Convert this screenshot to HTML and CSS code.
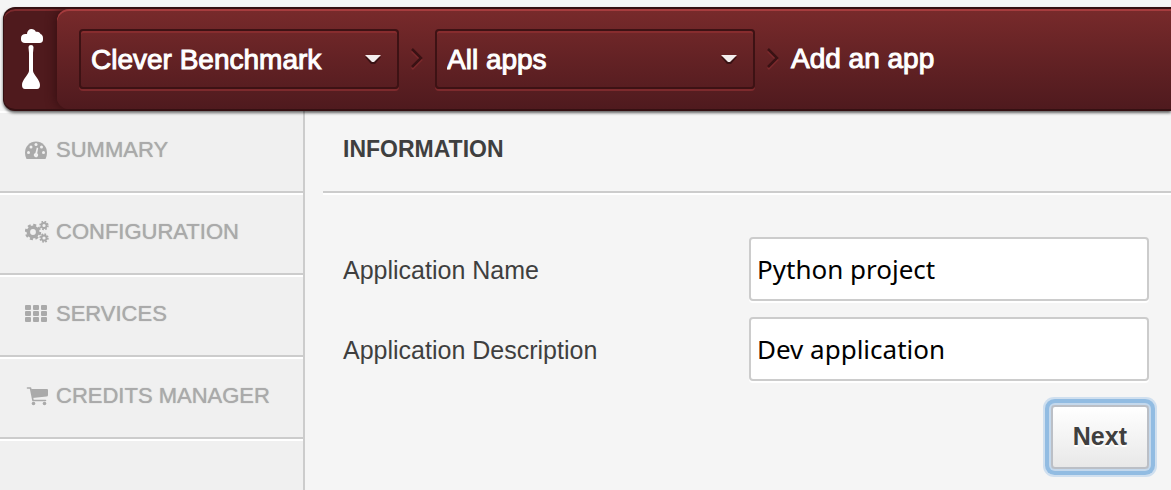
FILE: index.html
```html
<!DOCTYPE html>
<html lang="en">
<head>
<meta charset="utf-8">
<title>Add an app</title>
<link rel="stylesheet" href="styles.css">
</head>
<body>
<header class="topbar">
  <a class="logo" href="#" aria-label="Home">
    <svg width="24" height="62" viewBox="0 0 24 62" fill="#fff">
      <path d="M4 14C1.500 14 0 12.500 0 10.500V9C0 6.500 2 5 4.500 5H6C6 2 8 0 10.500 0C12.500 0 14 1 14.800 2.800C17.500 2.200 19 3.500 19.500 5C21 5.500 22 7 22 9V10.500C22 12.500 21 14 18.500 14Z"/>
      <path d="M7.500 18.500C7.500 16.800 8.700 16 10 16S12.500 16.800 12.500 18.500L12 24V42C12.500 45.500 19 51 19 56C19 58.500 18 60 16 60H4C2 60 1 58.500 1 56C1 51 7.500 45.500 8 42V24Z"/>
    </svg>
  </a>
  <nav class="crumbs" aria-label="Breadcrumb">
    <div class="picker">
      <select class="picker-select" aria-label="Organisation"><option>Clever Benchmark</option></select>
      <svg class="picker-arrow" width="18" height="12" viewBox="0 0 18 12"><path d="M1 3H17L11 10H7Z" fill="#3a1214"/><path d="M1 1H17L10 8H8Z" fill="#f4eeee"/></svg>
    </div>
    <svg class="chevron" width="14" height="24" viewBox="0 0 14 24" fill="none" stroke-width="2.500"><path d="M2 4L11 13L2 22" stroke="#7d2a2d"/><path d="M2 2L11 11L2 20" stroke="#3a1214"/></svg>
    <div class="picker">
      <select class="picker-select" aria-label="Application"><option>All apps</option></select>
      <svg class="picker-arrow" width="18" height="12" viewBox="0 0 18 12"><path d="M1 3H17L11 10H7Z" fill="#3a1214"/><path d="M1 1H17L10 8H8Z" fill="#f4eeee"/></svg>
    </div>
    <svg class="chevron" width="14" height="24" viewBox="0 0 14 24" fill="none" stroke-width="2.500"><path d="M2 4L11 13L2 22" stroke="#7d2a2d"/><path d="M2 2L11 11L2 20" stroke="#3a1214"/></svg>
    <span class="current">Add an app</span>
  </nav>
</header>
<div class="page">
  <nav class="sidebar" aria-label="Sections">
    <a class="item" href="#">
      <svg class="item-icon" width="24" height="22" viewBox="0 0 24 22"><path d="M0 13.500A11 11 0 0 1 22 13.500Q22 17.500 20.500 20H1.500Q0 17.500 0 13.500Z" fill="#aaa"/><g fill="#f0f0f0"><circle cx="3.500" cy="13.500" r="1.500"/><circle cx="6" cy="8" r="1.500"/><circle cx="11" cy="5.500" r="1.500"/><circle cx="16.500" cy="8" r="1.500"/><circle cx="18.500" cy="13.500" r="1.500"/><path d="M11.800 8.500L13.200 8.900L12.200 14.200A2.200 2.200 0 1 1 10.400 13.900Z"/></g></svg>
      SUMMARY
    </a>
    <a class="item" href="#">
      <svg class="item-icon" width="24" height="22" viewBox="0 0 24 22" fill="none" stroke="#aaa"><circle cx="8" cy="11" r="4.700" stroke-width="3.600"/><circle cx="8" cy="11" r="7" stroke-width="2.400" stroke-dasharray="3 2.498"/><circle cx="19" cy="4.500" r="2.500" stroke-width="1.800"/><circle cx="19" cy="4.500" r="3.900" stroke-width="1.600" stroke-dasharray="1.700 1.363"/><circle cx="19" cy="17" r="2.500" stroke-width="1.800"/><circle cx="19" cy="17" r="3.900" stroke-width="1.600" stroke-dasharray="1.700 1.363"/></svg>
      CONFIGURATION
    </a>
    <a class="item" href="#">
      <svg class="item-icon" width="24" height="22" viewBox="0 0 24 22" fill="#aaa"><rect y="2" width="6" height="5" rx="1"/><rect x="8" y="2" width="6" height="5" rx="1"/><rect x="16" y="2" width="6" height="5" rx="1"/><rect y="8" width="6" height="5" rx="1"/><rect x="8" y="8" width="6" height="5" rx="1"/><rect x="16" y="8" width="6" height="5" rx="1"/><rect y="14" width="6" height="5" rx="1"/><rect x="8" y="14" width="6" height="5" rx="1"/><rect x="16" y="14" width="6" height="5" rx="1"/></svg>
      SERVICES
    </a>
    <a class="item" href="#">
      <svg class="item-icon" width="24" height="22" viewBox="0 0 24 22"><path d="M2.500 3H5.500L8 15.500H20.500" fill="none" stroke="#aaa" stroke-width="1.600" stroke-linecap="round" stroke-linejoin="round"/><path d="M6 4H22Q23 4 23 5V10Q23 11.500 21.500 11.600L7.500 13Z" fill="#aaa"/><circle cx="8.500" cy="18.500" r="1.800" fill="#aaa"/><circle cx="19.500" cy="18.500" r="1.800" fill="#aaa"/></svg>
      CREDITS MANAGER
    </a>
    <div class="rest"></div>
  </nav>
  <main class="content">
    <h1 class="title">INFORMATION</h1>
    <form class="form">
      <label class="label" for="name">Application Name</label>
      <input class="field" id="name" type="text" value="Python project">
      <label class="label" for="description">Application Description</label>
      <input class="field" id="description" type="text" value="Dev application">
      <button class="next" type="button">Next</button>
    </form>
  </main>
</div>
</body>
</html>
```
FILE: styles.css
```css
* { box-sizing: border-box; }

body {
  margin: 0;
  min-height: 100vh;
  display: flex;
  flex-direction: column;
  overflow-x: hidden;
  background: #f5f5f5;
  color: #3f3f3f;
  font-family: "Liberation Sans", Arial, sans-serif;
}

/* Top bar */
.topbar {
  z-index: 1;
  display: flex;
  height: 104px;
  margin: 7px 0 0 3px;
  border: solid #351012;
  border-width: 2px 0 2px 1px;
  border-radius: 12px 0 0 12px;
  background: #4f1a1d;
  box-shadow: inset 0 2px #7d2a2d, 0 2px 3px rgba(0, 0, 0, 0.6);
}

.logo {
  width: 53px;
  flex: none;
  padding: 20px 0 0 17px;
  border-radius: 12px 0 0 12px;
}

.logo svg { display: block; }

.crumbs {
  flex: 1;
  min-width: 0;
  display: flex;
  align-items: center;
  padding-left: 22px;
  border-radius: 12px 0 0 12px;
  background: linear-gradient(#782a2b, #4f1a1e);
  box-shadow: inset 0 2px #a63c3e, -2px 0 10px #3a1013;
  clip-path: inset(0 0 0 -20px);
}

.picker {
  position: relative;
  flex: 0 1 320px;
  min-width: 0;
}

.picker-select {
  display: block;
  width: 100%;
  height: 60px;
  padding: 0 48px 0 10px;
  border: 2px solid #3d1214;
  border-radius: 4px;
  appearance: none;
  background: transparent;
  box-shadow: inset 0 2px #872c2e, 0 2px #7d2a2d;
  color: #fff;
  font: 28px "Liberation Sans", Arial, sans-serif;
  -webkit-text-stroke: 1px #fff;
}

.picker-select option { color: #3f3f3f; }

.picker-arrow {
  position: absolute;
  top: 25px;
  right: 17px;
  pointer-events: none;
}

.chevron {
  flex: none;
  margin: 0 11px;
}

.current {
  color: #fff;
  font-size: 28px;
  white-space: nowrap;
  -webkit-text-stroke: 1px #fff;
}

/* Sidebar */
.page {
  flex: 1;
  display: flex;
}

.sidebar {
  flex: none;
  width: 305px;
  border-right: 2px solid #ccc;
  background: #f0f0f0;
}

.item {
  display: flex;
  align-items: center;
  gap: 7px;
  height: 82px;
  padding: 0 16px 4px 25px;
  border-top: 2px solid #fff;
  border-bottom: 2px solid #ccc;
  color: #aaa;
  font-size: 22px;
  text-decoration: none;
  text-shadow: 0 0 1px #aaa;
  white-space: nowrap;
}

.item-icon { flex: none; }

.rest { border-top: 2px solid #fff; }

/* Form */
.content {
  flex: 1;
  min-width: 0;
  padding-left: 18px;
}

.title {
  margin: 0;
  padding: 22px 20px 26px;
  border-bottom: 2px solid #ccc;
  box-shadow: 0 2px #fff;
  font-size: 23px;
  line-height: 32px;
}

.form {
  display: grid;
  grid-template-columns: 1fr 400px;
  row-gap: 16px;
  align-items: center;
  padding: 44px 22px 20px 20px;
}

.label {
  padding-top: 2px;
  font-size: 25px;
}

.field {
  width: 100%;
  height: 64px;
  padding: 0 6px;
  border: 2px solid #ccc;
  border-radius: 4px;
  background: #fff;
  box-shadow: 0 2px #fff;
  color: #000;
  font: 26px "Noto Sans", sans-serif;
}

.next {
  grid-column: 2;
  justify-self: end;
  height: 64px;
  margin-top: 8px;
  padding: 0 20px 2px;
  border: 2px solid #bbbfc6;
  border-radius: 4px;
  background: linear-gradient(#fff, #e8e8e8);
  box-shadow: 0 0 0 2px #c4d8ec, 0 0 0 6px #92bce2, 0 0 0 8px #cfdfef;
  color: #3f3f3f;
  font: bold 25px "Liberation Sans", Arial, sans-serif;
  text-shadow: 0 2px #fff;
}
```
